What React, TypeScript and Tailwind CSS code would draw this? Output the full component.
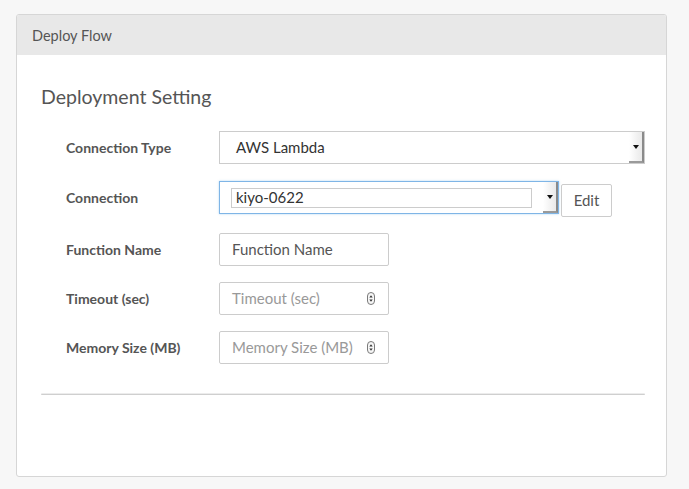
import React from 'react'

const font = { fontFamily: 'Lato, "Noto Sans", sans-serif' }

function SelectArrow() {
  return (
    <div className="flex h-full w-[15px] items-center justify-center border-r-2 border-b-2 border-r-[#8a8a8a] border-b-[#9a9a9a] bg-gradient-to-r from-white to-[#e9e9e9]">
      <svg width="6" height="4" viewBox="0 0 6 4">
        <path d="M0 0 L6 0 L3 4 Z" fill="#111" />
      </svg>
    </div>
  )
}

function Spinner() {
  return (
    <svg width="8" height="13" viewBox="0 0 8 13" className="mr-[13px]">
      <rect x="0.5" y="0.5" width="7" height="12" rx="3.5" fill="#f6f6f6" stroke="#7a7a7a" />
      <path d="M2.3 5.6 L5.7 5.6 L4 3.2 Z" fill="#333" />
      <path d="M2.3 7.4 L5.7 7.4 L4 9.8 Z" fill="#333" />
    </svg>
  )
}

function Row({ label, children, className = '' }: { label: string; children: React.ReactNode; className?: string }) {
  return (
    <div className={`flex items-start ${className}`}>
      <div className="flex h-[33px] w-[153px] items-center text-[14px] font-bold text-[#555]">{label}</div>
      {children}
    </div>
  )
}

export default function App() {
  return (
    <div className="min-h-[489px] bg-[#f7f7f7] pl-4 pt-[14px]" style={font}>
      <div className="h-[463px] w-[651px] overflow-hidden rounded-[3px] border border-[#d6d6d6] bg-white">
        <div className="flex h-[40px] items-center bg-[#e8e8e8] pl-[15px] pt-[2px] text-[14.5px] text-[#555]">Deploy Flow</div>

        <div className="pl-[24px] pr-[21px] pt-[31px]">
          <h2 className="text-[19.5px] leading-[22px] text-[#555]">Deployment Setting</h2>

          <div className="mt-[23px] pl-[25px]">
            <Row label="Connection Type">
              <div className="flex h-[33px] w-[426px] items-center justify-between border border-[#ccc] pl-[16px] text-[15px] text-[#333]">
                <span>AWS Lambda</span>
                <SelectArrow />
              </div>
            </Row>

            <Row label="Connection" className="mt-[17px]">
              <div className="flex h-[33px] w-[340px] items-center justify-between border border-[#7fb5e6] pl-[11px] shadow-[0_0_2px_rgba(102,175,233,0.5)]">
                <div className="flex h-[20px] w-[301px] items-center border border-[#ccc] pl-[4px] text-[15px] text-[#333]">kiyo-0622</div>
                <SelectArrow />
              </div>
              <button className="ml-[2px] mt-[3px] h-[33px] w-[51px] rounded-[2px] border border-[#ccc] bg-white text-[15px] text-[#555]">
                Edit
              </button>
            </Row>

            <Row label="Function Name" className="mt-[16px]">
              <div className="flex h-[33px] w-[170px] items-center rounded-[2px] border border-[#ccc] pl-[12px] text-[15px] text-[#555]">
                Function Name
              </div>
            </Row>

            <Row label="Timeout (sec)" className="mt-[16px]">
              <div className="flex h-[33px] w-[170px] items-center justify-between rounded-[2px] border border-[#ccc] pl-[12px] text-[15px] text-[#999]">
                <span>Timeout (sec)</span>
                <Spinner />
              </div>
            </Row>

            <Row label="Memory Size (MB)" className="mt-[16px]">
              <div className="flex h-[33px] w-[170px] items-center justify-between rounded-[2px] border border-[#ccc] pl-[12px] text-[15px] text-[#999]">
                <span>Memory Size (MB)</span>
                <Spinner />
              </div>
            </Row>
          </div>

          <div className="mt-[29px] h-[2px] rounded-full border-b border-[#cfcfcf] bg-[#ececec]" />
        </div>
      </div>
    </div>
  )
}
